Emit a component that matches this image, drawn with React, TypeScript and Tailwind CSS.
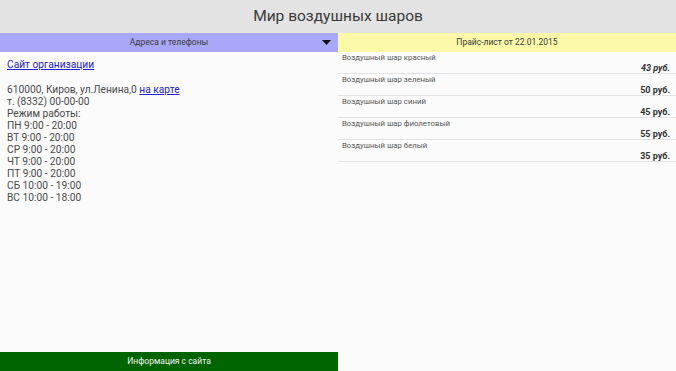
import React from "react";

const prices = [
  { name: "Воздушный шар красный", price: "43 руб.", italic: true },
  { name: "Воздушный шар зеленый", price: "50 руб." },
  { name: "Воздушный шар синий", price: "45 руб." },
  { name: "Воздушный шар фиолетовый", price: "55 руб." },
  { name: "Воздушный шар белый", price: "35 руб." },
];

const hours = [
  "ПН 9:00 - 20:00",
  "ВТ 9:00 - 20:00",
  "СР 9:00 - 20:00",
  "ЧТ 9:00 - 20:00",
  "ПТ 9:00 - 20:00",
  "СБ 10:00 - 19:00",
  "ВС 10:00 - 18:00",
];

export default function App() {
  return (
    <div
      className="w-[676px] h-[371px] flex flex-col bg-[#fbfbfb] text-[#333] overflow-hidden"
      style={{ fontFamily: "Roboto, 'Noto Sans', sans-serif" }}
    >
      <div className="h-[33px] bg-[#e3e3e3] flex items-center justify-center text-[15.5px] text-[#3a3a3a]">
        Мир воздушных шаров
      </div>
      <div className="flex flex-1 min-h-0">
        <div className="w-[338px] flex flex-col">
          <div className="h-[19px] bg-[#a9a7f8] flex items-center justify-center relative text-[8.5px] text-[#3a3a3a]">
            Адреса и телефоны
            <svg className="absolute right-[7px] top-[7px]" width="9" height="5" viewBox="0 0 9 5">
              <polygon points="0,0 9,0 4.5,5" fill="#111" />
            </svg>
          </div>
          <div className="flex-1 px-[7px] pt-[7px] text-[10.2px] leading-[12px] text-[#4a4a4a]">
            <a href="#" className="text-[#2222dd] underline">Сайт организации</a>
            <div className="h-[12px]" />
            <div className="mt-[1px]">
              610000, Киров, ул.Ленина,0{" "}
              <a href="#" className="text-[#2222dd] underline">на карте</a>
            </div>
            <div>т. (8332) 00-00-00</div>
            <div>Режим работы:</div>
            {hours.map((h) => (
              <div key={h}>{h}</div>
            ))}
          </div>
          <div className="h-[19px] bg-[#006400] text-[#f4f4f4] text-[8.5px] flex items-center justify-center">
            Информация с сайта
          </div>
        </div>
        <div className="flex-1 flex flex-col">
          <div className="h-[19px] bg-[#fbf9a8] flex items-center justify-center text-[8.5px] text-[#3a3a3a]">
            Прайс-лист от 22.01.2015
          </div>
          {prices.map((p) => (
            <div key={p.name} className="h-[22px] border-b border-[#e2e2e2] px-[4px] pt-[1px] flex flex-col">
              <div className="text-[7.8px] leading-[10px] text-[#555]">{p.name}</div>
              <div
                className={
                  "text-right text-[9px] leading-[11px] font-bold text-[#333] pr-[2px] " +
                  (p.italic ? "italic" : "")
                }
              >
                {p.price}
              </div>
            </div>
          ))}
        </div>
      </div>
    </div>
  );
}
